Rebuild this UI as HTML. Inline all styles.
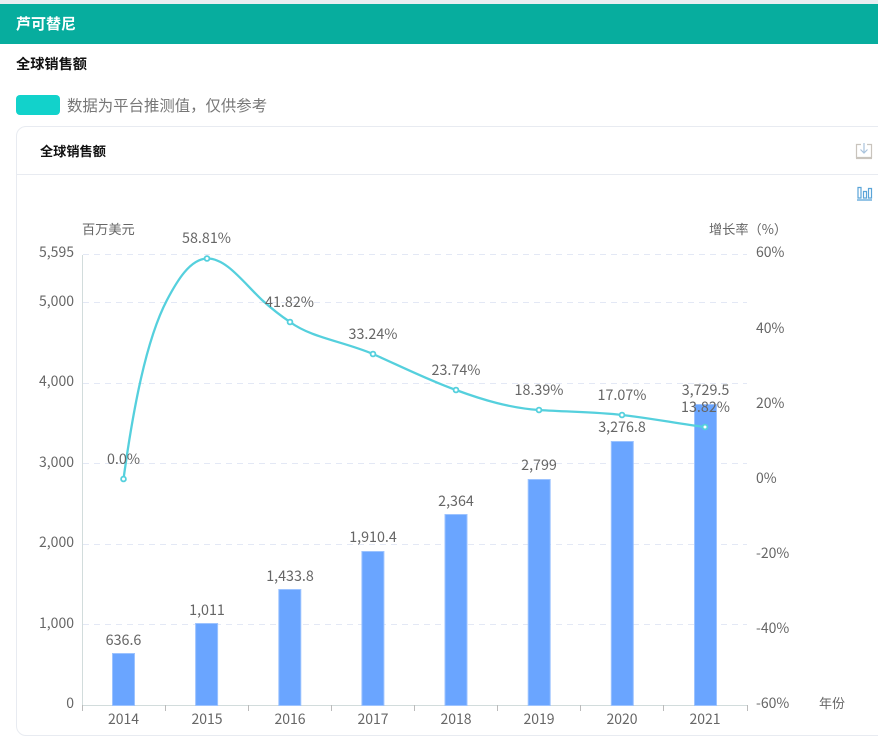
<!DOCTYPE html>
<html lang="zh">
<head>
<meta charset="utf-8">
<style>
html,body{margin:0;padding:0;width:878px;height:736px;overflow:hidden;background:#fff;font-family:"Liberation Sans","Noto Sans CJK SC",sans-serif}
#page{position:relative;width:878px;height:736px;overflow:hidden}
.abs{position:absolute;white-space:nowrap}
#top{position:absolute;left:0;top:0;width:878px;height:4px;background:#e9edf1}
#bar{position:absolute;left:0;top:4px;width:878px;height:40px;background:#07ad9e}
#card{position:absolute;left:16px;top:126px;width:880px;height:610px;border:1px solid #e8ebf1;border-radius:10px;box-sizing:border-box}
#hr{position:absolute;left:17px;top:174px;width:861px;height:1px;background:#e8ebf1}
svg{position:absolute;left:0;top:0}
svg text{font-family:"Noto Sans CJK SC",sans-serif;font-size:14px;fill:#666}
svg .d text{font-size:14.300px}
</style>
</head>
<body>
<div id="page">
<div id="top"></div>
<div id="bar"></div>
<div class="abs" style="left:16px;top:15px;font-size:15px;line-height:20px;font-weight:700;color:#fff">芦可替尼</div>
<div class="abs" style="left:16px;top:55px;font-size:14.200px;line-height:20px;font-weight:700;color:#111">全球销售额</div>
<div class="abs" style="left:16px;top:95px;width:44px;height:20px;border-radius:4px;background:#12d2cb"></div>
<div class="abs" style="left:67px;top:96px;font-size:15.400px;line-height:21px;color:#777">数据为平台推测值，仅供参考</div>
<div id="card"></div>
<div id="hr"></div>
<div class="abs" style="left:40px;top:142px;font-size:13.200px;line-height:20px;font-weight:700;color:#111">全球销售额</div>
<svg width="878" height="736" viewBox="0 0 878 736">
  <!-- icons -->
  <g fill="none" stroke-width="1.2">
    <path d="M861 144.500H856.500V157.500H871.500V144.500H867" stroke="#c9c4bd"/>
    <path d="M864 143V153M860.500 149.500L864 153L867.500 149.500" stroke="#a9c3dc"/>
    <path d="M856 158.500H872" stroke="#c9c4bd"/>
    <path d="M858 187.500H861V198H858ZM863.500 191.500H866.500V198H863.500ZM868.500 188.500H871.500V198H868.500Z" stroke="#5aa4d8"/>
    <path d="M857 200H872" stroke="#5aa4d8" stroke-width="1.300"/>
  </g>
  <!-- grid -->
  <g stroke="#e3e8f5" stroke-width="1" stroke-dasharray="6 5" fill="none">
    <path d="M83 254.500H747M83 302.500H747M83 383.500H747M83 463.500H747M83 544.500H747M83 624.500H747"/>
  </g>
  <!-- axes -->
  <g stroke="#d2dcdc" stroke-width="1" fill="none">
    <path d="M82.500 255V705.500"/>
    <path d="M82 705.500H748"/>
    <path d="M82.500 705V711M165.500 705V711M248.500 705V711M331.500 705V711M414.500 705V711M497.500 705V711M580.500 705V711M663.500 705V711M747.500 705V711" stroke="#bbb"/>
  </g>
  <!-- bars -->
  <g fill="#6aa5ff" stroke="#9cc3ff" stroke-width="1">
    <rect x="112.500" y="653.500" width="22" height="52"/>
    <rect x="195.600" y="623.500" width="22" height="82"/>
    <rect x="278.800" y="589.500" width="22" height="116"/>
    <rect x="361.900" y="551.500" width="22" height="154"/>
    <rect x="445" y="514.500" width="22" height="191"/>
    <rect x="528.200" y="479.500" width="22" height="226"/>
    <rect x="611.300" y="441.500" width="22" height="264"/>
    <rect x="694.500" y="404.500" width="22" height="301"/>
  </g>
  <!-- line -->
  <path d="M123.500 479C133 410 146 340 167 300C177 281 190 259 207 258.500C226 258 243 282 262 300C272 309 281 316 290 322C312 338 342 341 373 354C400 366 428 380 456 390C483 400 510 408 539 410C570 412 596 412 622 415C650 418 680 424 705 427" fill="none" stroke="#55d0dd" stroke-width="2.300"/>
  <g fill="#fff" stroke="#55d0dd" stroke-width="1.800">
    <circle cx="123.500" cy="479" r="2.400"/>
    <circle cx="207" cy="258.500" r="2.400"/>
    <circle cx="290" cy="322" r="2.400"/>
    <circle cx="373" cy="354" r="2.400"/>
    <circle cx="456" cy="390" r="2.400"/>
    <circle cx="539" cy="410" r="2.400"/>
    <circle cx="622" cy="415" r="2.400"/>
    <circle cx="705" cy="427" r="2.400"/>
  </g>
  <!-- axis names -->
  <text x="82" y="234" style="font-size:13.200px">百万美元</text>
  <text x="709" y="234" style="font-size:13.200px">增长率（%）</text>
  <text x="819" y="708" style="font-size:13px">年份</text>
  <!-- left labels -->
  <g text-anchor="end">
    <text x="74" y="257">5,595</text>
    <text x="74" y="306">5,000</text>
    <text x="74" y="386">4,000</text>
    <text x="74" y="467">3,000</text>
    <text x="74" y="547">2,000</text>
    <text x="74" y="628">1,000</text>
    <text x="74" y="708">0</text>
  </g>
  <!-- right labels -->
  <g>
    <text x="756" y="257">60%</text>
    <text x="756" y="333">40%</text>
    <text x="756" y="408">20%</text>
    <text x="756" y="483">0%</text>
    <text x="756" y="558">-20%</text>
    <text x="756" y="633">-40%</text>
    <text x="756" y="708">-60%</text>
  </g>
  <!-- x labels -->
  <g text-anchor="middle">
    <text x="123.500" y="724">2014</text>
    <text x="207" y="724">2015</text>
    <text x="290" y="724">2016</text>
    <text x="373" y="724">2017</text>
    <text x="456" y="724">2018</text>
    <text x="539" y="724">2019</text>
    <text x="622" y="724">2020</text>
    <text x="705" y="724">2021</text>
  </g>
  <!-- bar labels -->
  <g text-anchor="middle" class="d">
    <text x="123.500" y="645">636.6</text>
    <text x="207" y="615">1,011</text>
    <text x="290" y="581">1,433.8</text>
    <text x="373" y="542">1,910.4</text>
    <text x="456" y="506">2,364</text>
    <text x="539" y="470">2,799</text>
    <text x="622" y="432">3,276.8</text>
    <text x="705.500" y="395">3,729.5</text>
  </g>
  <!-- line labels -->
  <g text-anchor="middle" class="d">
    <text x="123.500" y="464">0.0%</text>
    <text x="206.500" y="243">58.81%</text>
    <text x="289.500" y="307">41.82%</text>
    <text x="373" y="339">33.24%</text>
    <text x="456" y="375">23.74%</text>
    <text x="539" y="395">18.39%</text>
    <text x="622" y="400">17.07%</text>
    <text x="705.500" y="412">13.82%</text>
  </g>
</svg>
</div>
</body>
</html>
